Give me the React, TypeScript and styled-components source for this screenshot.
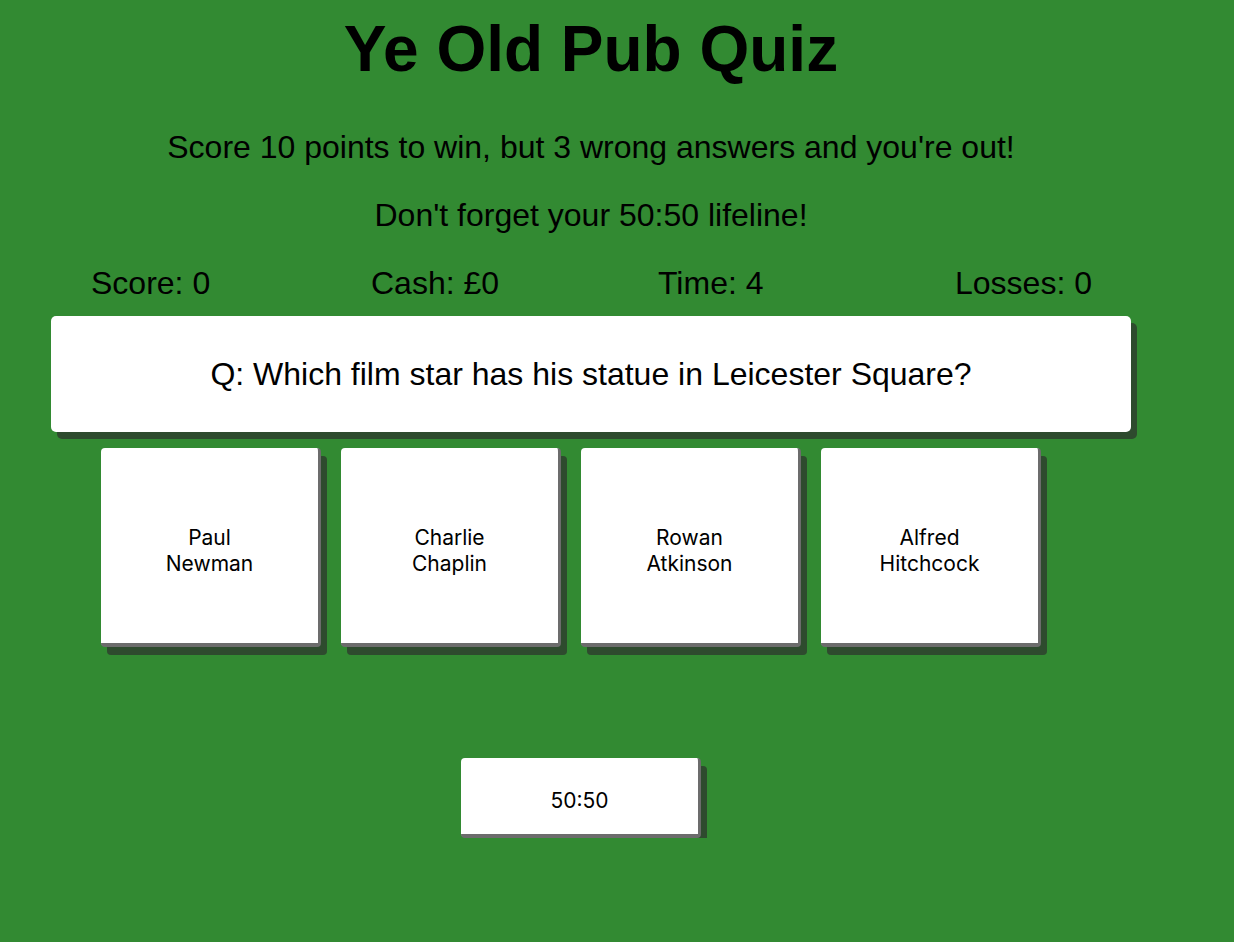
import React from "react";
import styled, { createGlobalStyle } from "styled-components";

const GlobalStyle = createGlobalStyle`
  html, body {
    margin: 0;
    padding: 0;
    background: #328a32;
  }

  body {
    font-family: "Liberation Sans", Arial, Helvetica, sans-serif;
    color: #000;
  }
`;

const answers = ["Paul Newman", "Charlie Chaplin", "Rowan Atkinson", "Alfred Hitchcock"];

const stats = [
  { label: "Score", value: "0" },
  { label: "Cash", value: "£0" },
  { label: "Time", value: "4" },
  { label: "Losses", value: "0" },
];

const App: React.FC = () => {
  return (
    <>
      <GlobalStyle />
      <Page>
        <Title>Ye Old Pub Quiz</Title>
        <Intro>Score 10 points to win, but 3 wrong answers and you're out!</Intro>
        <Reminder>Don't forget your 50:50 lifeline!</Reminder>

        <StatsRow>
          {stats.map((s) => (
            <Stat key={s.label}>
              {s.label}: {s.value}
            </Stat>
          ))}
        </StatsRow>

        <QuestionCard>Q: Which film star has his statue in Leicester Square?</QuestionCard>

        <AnswerRow>
          {answers.map((a) => (
            <AnswerButton key={a}>
              <AnswerLabel>{a}</AnswerLabel>
            </AnswerButton>
          ))}
        </AnswerRow>

        <LifelineRow>
          <LifelineButton>50:50</LifelineButton>
        </LifelineRow>
      </Page>
    </>
  );
};

const Page = styled.div`
  width: 1182px;
  display: flex;
  flex-direction: column;
`;

const Title = styled.h1`
  margin: 12px 0 0;
  font-size: 64px;
  line-height: 74px;
  font-weight: bold;
  text-align: center;
`;

const Intro = styled.p`
  margin: 43px 0 0;
  font-size: 32px;
  line-height: 37px;
  text-align: center;
`;

const Reminder = styled(Intro)`
  margin-top: 31px;
`;

const StatsRow = styled.div`
  display: grid;
  grid-template-columns: 280px 287px 297px auto;
  margin-top: 31px;
  padding-left: 91px;
  font-size: 32px;
  line-height: 37px;
`;

const Stat = styled.div`
  white-space: nowrap;
`;

const QuestionCard = styled.div`
  margin: 14px 0 0 51px;
  width: 1080px;
  height: 116px;
  display: flex;
  align-items: center;
  justify-content: center;
  background: #fff;
  border-radius: 5px;
  box-shadow: 6px 7px 0 #2e4b2e;
  font-size: 32px;
`;

const Button = styled.button`
  background: #fff;
  border: none;
  border-right: 3px solid #6c6c6c;
  border-bottom: 4px solid #6c6c6c;
  border-radius: 4px;
  box-shadow: 6px 8px 0 #2e4b2e;
  font-family: Inter, "Noto Sans", sans-serif;
  font-size: 21px;
  line-height: 26px;
  color: #000;
  padding: 10px 0 0;
  cursor: pointer;
  display: flex;
  align-items: center;
  justify-content: center;
`;

const AnswerRow = styled.div`
  display: flex;
  gap: 20px;
  margin-top: 16px;
  padding-left: 101px;
`;

const AnswerButton = styled(Button)`
  width: 220px;
  height: 199px;
`;

const AnswerLabel = styled.span`
  max-width: 110px;
  text-align: center;
`;

const LifelineRow = styled.div`
  display: flex;
  margin-top: 111px;
  padding-left: 461px;
`;

const LifelineButton = styled(Button)`
  width: 240px;
  height: 80px;
`;

export default App;
